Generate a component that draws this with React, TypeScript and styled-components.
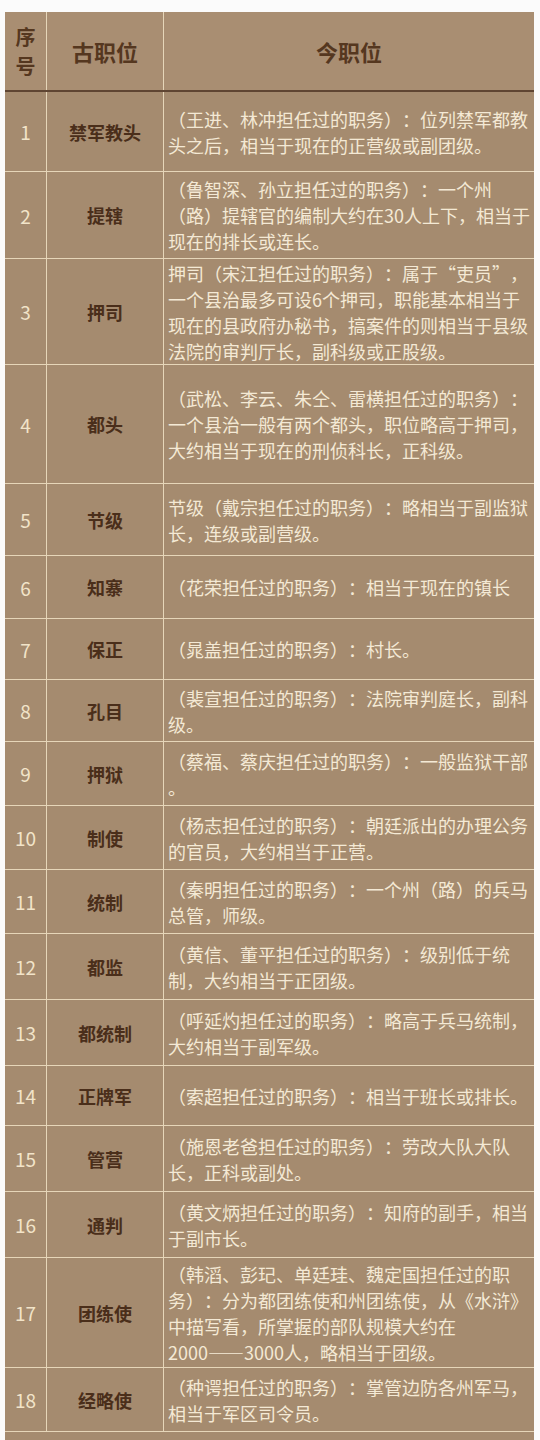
import * as React from "react";
import styled, { createGlobalStyle } from "styled-components";

const GlobalStyle = createGlobalStyle`
  html, body {
    margin: 0;
    padding: 0;
    background: #fbfbfb;
  }
  body {
    font-family: "Noto Sans CJK SC", "Noto Sans", sans-serif;
  }
`;

interface Post {
  no: number;
  name: string;
  lines: string[];
  height: number;
}

const posts: Post[] = [
  { no: 1, name: "禁军教头", height: 80, lines: ["（王进、林冲担任过的职务）：位列禁军都教", "头之后，相当于现在的正营级或副团级。"] },
  { no: 2, name: "提辖", height: 87, lines: ["（鲁智深、孙立担任过的职务）：一个州", "（路）提辖官的编制大约在30人上下，相当于", "现在的排长或连长。"] },
  { no: 3, name: "押司", height: 106, lines: ["押司（宋江担任过的职务）：属于“吏员”，", "一个县治最多可设6个押司，职能基本相当于", "现在的县政府办秘书，搞案件的则相当于县级", "法院的审判厅长，副科级或正股级。"] },
  { no: 4, name: "都头", height: 119, lines: ["（武松、李云、朱仝、雷横担任过的职务）：", "一个县治一般有两个都头，职位略高于押司，", "大约相当于现在的刑侦科长，正科级。"] },
  { no: 5, name: "节级", height: 72, lines: ["节级（戴宗担任过的职务）：略相当于副监狱", "长，连级或副营级。"] },
  { no: 6, name: "知寨", height: 63, lines: ["（花荣担任过的职务）：相当于现在的镇长"] },
  { no: 7, name: "保正", height: 61, lines: ["（晁盖担任过的职务）：村长。"] },
  { no: 8, name: "孔目", height: 62, lines: ["（裴宣担任过的职务）：法院审判庭长，副科", "级。"] },
  { no: 9, name: "押狱", height: 64, lines: ["（蔡福、蔡庆担任过的职务）：一般监狱干部", "。"] },
  { no: 10, name: "制使", height: 64, lines: ["（杨志担任过的职务）：朝廷派出的办理公务", "的官员，大约相当于正营。"] },
  { no: 11, name: "统制", height: 64, lines: ["（秦明担任过的职务）：一个州（路）的兵马", "总管，师级。"] },
  { no: 12, name: "都监", height: 66, lines: ["（黄信、董平担任过的职务）：级别低于统", "制，大约相当于正团级。"] },
  { no: 13, name: "都统制", height: 66, lines: ["（呼延灼担任过的职务）：略高于兵马统制，", "大约相当于副军级。"] },
  { no: 14, name: "正牌军", height: 60, lines: ["（索超担任过的职务）：相当于班长或排长。"] },
  { no: 15, name: "管营", height: 66, lines: ["（施恩老爸担任过的职务）：劳改大队大队", "长，正科或副处。"] },
  { no: 16, name: "通判", height: 66, lines: ["（黄文炳担任过的职务）：知府的副手，相当", "于副市长。"] },
  { no: 17, name: "团练使", height: 110, lines: ["（韩滔、彭玘、单廷珪、魏定国担任过的职", "务）：分为都团练使和州团练使，从《水浒》", "中描写看，所掌握的部队规模大约在", "2000——3000人，略相当于团级。"] },
  { no: 18, name: "经略使", height: 64, lines: ["（种谔担任过的职务）：掌管边防各州军马，", "相当于军区司令员。"] },
];

const Page = styled.div`
  padding: 12px 6px 0 5px;
`;

const Table = styled.div`
  width: 529px;
  background: #a58b6f;
  padding-bottom: 40px;
`;

const HeaderRow = styled.div`
  display: grid;
  grid-template-columns: 42px 117px 1fr;
  box-sizing: border-box;
  height: 80px;
  border-bottom: 2px solid #5f4532;
  background: #a98e72;
`;

const Row = styled.div<{ $height: number }>`
  display: grid;
  grid-template-columns: 42px 117px 1fr;
  box-sizing: border-box;
  height: ${(p) => p.$height}px;
  border-bottom: 1px solid #e6d6b9;
`;

const Cell = styled.div<{ $divider?: boolean }>`
  display: flex;
  flex-direction: column;
  align-items: center;
  justify-content: center;
  border-right: ${(p) => (p.$divider ? "1px solid #e6d6b9" : "none")};
  min-width: 0;
`;

const HeadText = styled.div<{ $small?: boolean }>`
  font-size: ${(p) => (p.$small ? 20 : 22)}px;
  font-weight: 700;
  color: #55371f;
  line-height: ${(p) => (p.$small ? 29 : 30)}px;
  text-align: center;
`;

const Num = styled.span`
  font-size: 19px;
  color: #f2e4c9;
`;

const Name = styled.span`
  font-size: 18px;
  font-weight: 700;
  color: #4a2e1a;
`;

const DescCell = styled.div`
  display: flex;
  flex-direction: column;
  justify-content: center;
  padding: 0 0 0 4px;
  min-width: 0;
`;

const DescLine = styled.div`
  font-size: 18px;
  line-height: 26px;
  color: #f4e9d5;
  white-space: nowrap;
  text-spacing-trim: space-all;
`;

const App: React.FC = (): React.ReactElement => {
  return (
    <Page lang="zh-CN">
      <GlobalStyle />
      <Table>
        <HeaderRow>
          <Cell $divider>
            <HeadText $small>序</HeadText>
            <HeadText $small>号</HeadText>
          </Cell>
          <Cell $divider>
            <HeadText>古职位</HeadText>
          </Cell>
          <Cell>
            <HeadText>今职位</HeadText>
          </Cell>
        </HeaderRow>
        {posts.map((post) => (
          <Row key={post.no} $height={post.height}>
            <Cell $divider>
              <Num>{post.no}</Num>
            </Cell>
            <Cell $divider>
              <Name>{post.name}</Name>
            </Cell>
            <DescCell>
              {post.lines.map((line, i) => (
                <DescLine key={i}>{line}</DescLine>
              ))}
            </DescCell>
          </Row>
        ))}
      </Table>
    </Page>
  );
};

export default App;
